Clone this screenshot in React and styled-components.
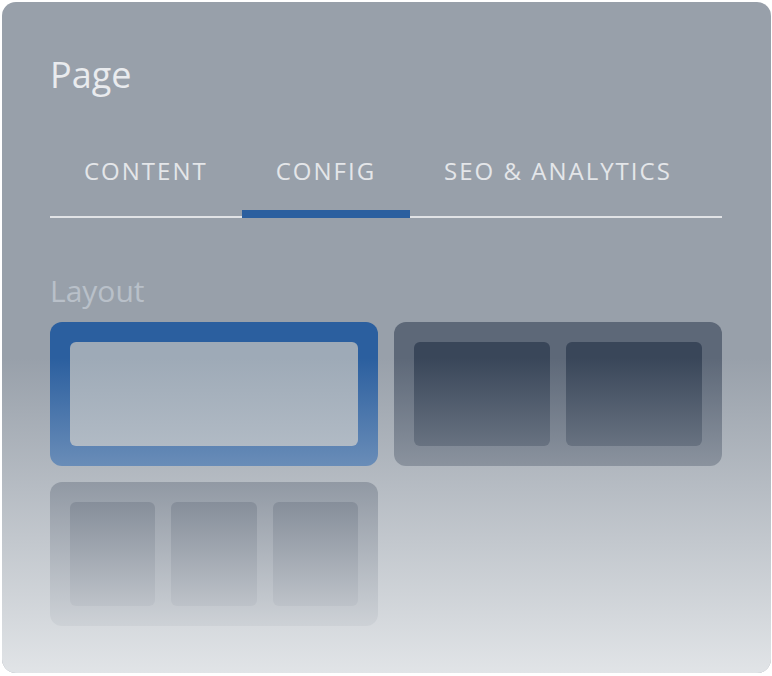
import React, {useState} from 'react';
import styled, {createGlobalStyle} from 'styled-components';

const GlobalStyle = createGlobalStyle`
    body {
        margin: 0;
        background: #ffffff;
        font-family: "Open Sans", "Liberation Sans", sans-serif;
    }
`;

const Page = styled.div`
    padding: 2px;
`;

const Card = styled.div`
    position: relative;
    width: 769px;
    height: 671px;
    box-sizing: border-box;
    padding: 49px 49px 0 48px;
    border-radius: 14px;
    overflow: hidden;
    background: #98a0aa;

    /* fade towards the bottom of the panel */
    &::after {
        content: "";
        position: absolute;
        inset: 0;
        pointer-events: none;
        background: linear-gradient(
            to bottom,
            rgba(225, 228, 231, 0) 53%,
            rgba(225, 228, 231, 1) 100%
        );
    }
`;

const Title = styled.h1`
    margin: 0;
    font-size: 36px;
    line-height: 48px;
    font-weight: 400;
    color: #e9ebee;
`;

const TabBar = styled.div`
    display: flex;
    margin-top: 56px;
    border-bottom: 2px solid #e1e3e6;
`;

const Tab = styled.button`
    margin: 0 0 -2px;
    padding: 0 34px 23px;
    border: none;
    border-bottom: 8px solid ${p => (p.$active ? '#2b5f9f' : 'transparent')};
    background: none;
    font-family: inherit;
    font-size: 24px;
    line-height: 32px;
    letter-spacing: 2px;
    color: #e4e6e9;
    cursor: pointer;
`;

const Label = styled.div`
    margin-top: 53px;
    font-size: 30px;
    line-height: 40px;
    color: #b9c0c9;
`;

const Grid = styled.div`
    display: grid;
    grid-template-columns: 328px 328px;
    gap: 16px;
    margin-top: 11px;
`;

const Option = styled.div`
    display: flex;
    gap: 16px;
    height: 144px;
    box-sizing: border-box;
    padding: 20px;
    border-radius: 12px;
    background: ${p => (p.$selected ? '#2b5f9f' : '#5d6878')};
    cursor: pointer;
`;

const Column = styled.div`
    flex: 1;
    border-radius: 6px;
    background: ${p => (p.$selected ? '#9eaab7' : '#394659')};
`;

const tabs = ['CONTENT', 'CONFIG', 'SEO & ANALYTICS'];
const layouts = [1, 2, 3];

function App() {
    const [tab, setTab] = useState(1);
    const [layout, setLayout] = useState(0);

    return (
        <Page>
            <GlobalStyle/>
            <Card>
                <Title>Page</Title>
                <TabBar>
                    {tabs.map((name, i) => (
                        <Tab key={name} $active={i === tab} onClick={() => setTab(i)}>{name}</Tab>
                    ))}
                </TabBar>
                <Label>Layout</Label>
                <Grid>
                    {layouts.map((cols, i) => (
                        <Option key={cols} $selected={i === layout} onClick={() => setLayout(i)}>
                            {Array.from({length: cols}).map((_, j) => (
                                <Column key={j} $selected={i === layout}/>
                            ))}
                        </Option>
                    ))}
                </Grid>
            </Card>
        </Page>
    );
}

export default App;
